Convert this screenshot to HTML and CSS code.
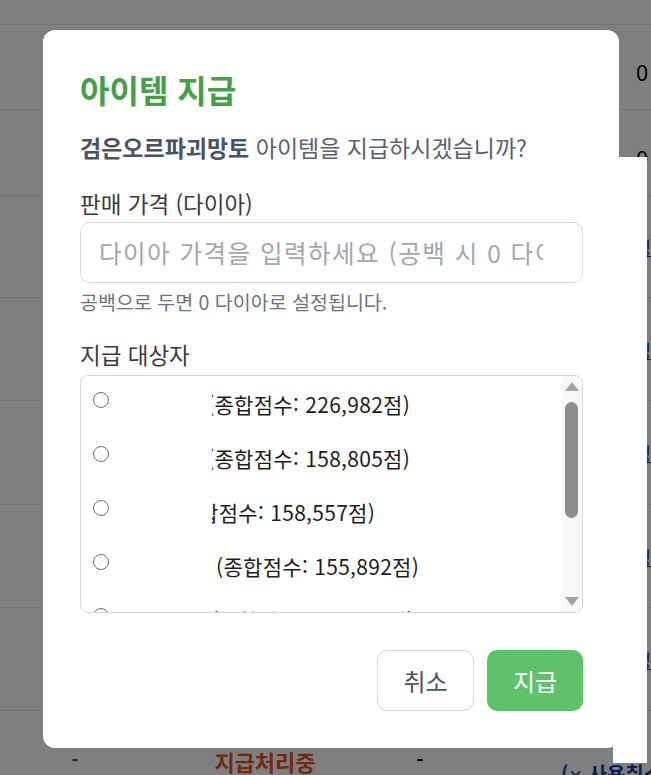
FILE: index.html
```html
<!DOCTYPE html>
<html lang="ko">
<head>
<meta charset="utf-8">
<title>아이템 지급</title>
<link rel="stylesheet" href="styles.css">
</head>
<body>
<div class="bg">
  <div class="row r0"></div>
  <div class="row r1"><div class="c1"></div><div class="c2"></div><div class="c3"></div><div class="c4"></div><div class="c5 num">0</div></div>
  <div class="row r2"><div class="c1"></div><div class="c2"></div><div class="c3"></div><div class="c4"></div><div class="c5 num">0</div></div>
  <div class="row r3"><div class="c1"></div><div class="c2"></div><div class="c3"></div><div class="c4"></div><div class="c5"><span class="lnk">수정</span></div></div>
  <div class="row r4"><div class="c1"></div><div class="c2"></div><div class="c3"></div><div class="c4"></div><div class="c5"><span class="lnk">수정</span></div></div>
  <div class="row r5"><div class="c1"></div><div class="c2"></div><div class="c3"></div><div class="c4"></div><div class="c5"><span class="lnk">수정</span></div></div>
  <div class="row r6"><div class="c1"></div><div class="c2"></div><div class="c3"></div><div class="c4"></div><div class="c5"><span class="lnk">수정</span></div></div>
  <div class="row r7"><div class="c1"></div><div class="c2"></div><div class="c3"></div><div class="c4"></div><div class="c5"><span class="lnk">수정</span></div></div>
  <div class="row r8">
    <div class="c1"><span class="dash-g">-</span></div>
    <div class="c2"><span class="status">지급처리중</span></div>
    <div class="c3"><span class="dash">-</span></div>
    <div class="c4"><span class="cancel-link">(<span class="x">✕</span> 사용취소)</span></div>
    <div class="c5"></div>
  </div>
</div>

<div class="overlay"></div>
<div class="side-panel"></div>

<div class="modal">
  <h2 class="title">아이템 지급</h2>
  <p class="desc"><strong>검은오르파괴망토</strong> 아이템을 지급하시겠습니까?</p>

  <label class="label" for="price">판매 가격 (다이아)</label>
  <input id="price" class="input" type="text" placeholder="다이아 가격을 입력하세요 (공백 시 0 다이아)">
  <p class="hint">공백으로 두면 0 다이아로 설정됩니다.</p>

  <div class="label label2">지급 대상자</div>
  <div class="list">
    <div class="items">
      <label class="opt"><input type="radio" name="target" class="radio"><span class="name" style="width:87px"></span><span class="score">(종합점수: 226,982점)</span></label>
      <label class="opt"><input type="radio" name="target" class="radio"><span class="name" style="width:87px"></span><span class="score">(종합점수: 158,805점)</span></label>
      <label class="opt"><input type="radio" name="target" class="radio"><span class="name" style="width:52px"></span><span class="score">(종합점수: 158,557점)</span></label>
      <label class="opt"><input type="radio" name="target" class="radio"><span class="name" style="width:96px"></span><span class="score">(종합점수: 155,892점)</span></label>
      <label class="opt"><input type="radio" name="target" class="radio"><span class="name" style="width:91px"></span><span class="score">(종합점수: 149,385점)</span></label>
    </div>
    <div class="sbar">
      <span class="arrow-up"></span>
      <span class="thumb"></span>
      <span class="arrow-down"></span>
    </div>
    <span class="mask"></span>
  </div>

  <div class="actions">
    <button class="btn btn-cancel" type="button">취소</button>
    <button class="btn btn-ok" type="button">지급</button>
  </div>
</div>
</body>
</html>
```

FILE: styles.css
```css
* { box-sizing: border-box; }

html, body {
  margin: 0;
  padding: 0;
  height: 100%;
  overflow: hidden;
}

body {
  background: #ffffff;
  font-family: "Noto Sans CJK KR", "Noto Sans", sans-serif;
  color: #222;
}

/* background table */
.bg {
  width: 651px;
}
.row {
  display: flex;
  align-items: center;
  border-bottom: 1px solid #e6e6e6;
  font-size: 20px;
}
.r0 { height: 25px; }
.r1 { height: 85px; }
.r2 { height: 86px; }
.r3 { height: 102px; }
.r4 { height: 103px; }
.r5 { height: 104px; }
.r6 { height: 103px; }
.r7 { height: 103px; }
.r8 { height: 100px; align-items: flex-start; padding-top: 34px; border-bottom: 0; }

.c1 { width: 150px; text-align: center; }
.c2 { width: 230px; text-align: center; }
.c3 { width: 80px; text-align: center; }
.c4 { width: 172px; padding-left: 101px; white-space: nowrap; }
.c5 { flex: 1; white-space: nowrap; padding-left: 4px; }

.num { color: #000; font-size: 22px; padding-top: 8px; }
.lnk { padding-left: 14px; color: #1a3bb0; text-decoration: underline; font-size: 18px; }
.dash-g { color: #2e7d32; font-weight: 700; }
.status { color: #e0561a; font-weight: 700; font-size: 22px; }
.dash { color: #000; font-weight: 700; }
.cancel-link { color: #1a3bb0; font-weight: 700; font-size: 20px; display: inline-block; padding-top: 14px; }
.x { font-family: "DejaVu Sans", sans-serif; font-size: 17px; }

.overlay {
  position: fixed;
  inset: 0;
  background: rgba(0, 0, 0, 0.5);
}

.side-panel {
  position: fixed;
  left: 613px;
  top: 157px;
  width: 34px;
  height: 606px;
  background: #ffffff;
}

/* modal */
.modal {
  position: fixed;
  left: 43px;
  top: 30px;
  width: 576px;
  height: 718px;
  background: #fff;
  border-radius: 12px;
  padding: 40px 36px 37px 37px;
  display: flex;
  flex-direction: column;
}

.title {
  margin: 0;
  font-size: 32px;
  line-height: 38px;
  font-weight: 700;
  color: #43a047;
}

.desc {
  margin: 24px 0 0;
  font-size: 23px;
  line-height: 30px;
  color: #596170;
}
.desc strong {
  color: #4a5261;
  font-weight: 700;
}

.label {
  display: block;
  margin-top: 26px;
  font-size: 22.5px;
  line-height: 30px;
  color: #3a3a3a;
}
.label2 { margin-top: 24px; }

.input {
  display: block;
  margin-top: 4px;
  width: 503px;
  height: 61px;
  border: 1px solid #d6d8de;
  border-radius: 10px;
  padding: 0 39px 0 18px;
  font-family: inherit;
  font-size: 24.5px;
  letter-spacing: 1.5px;
  color: #222;
  background: #fff;
  outline: none;
}
.input::placeholder { color: #a0a6b1; }

.hint {
  margin: 6px 0 0;
  font-size: 19.5px;
  line-height: 26px;
  color: #6b7280;
}

.list {
  position: relative;
  margin-top: 6px;
  width: 503px;
  height: 238px;
  border: 1px solid #d6d8de;
  border-radius: 8px;
  display: flex;
  overflow: hidden;
}

.items {
  flex: 1;
  overflow: hidden;
}

.opt {
  display: flex;
  align-items: flex-start;
  height: 54px;
  padding: 16px 0 0 12px;
  white-space: nowrap;
}

.radio {
  appearance: none;
  -webkit-appearance: none;
  margin: 0;
  width: 16px;
  height: 16px;
  border: 1px solid #6f6f6f;
  border-radius: 50%;
  background: #fff;
  flex: none;
}

.name {
  display: inline-block;
  flex: none;
  margin-left: 11px;
}

.score {
  font-size: 21px;
  line-height: 24px;
  color: #1c1c1c;
  letter-spacing: 0.3px;
}

.mask {
  position: absolute;
  left: 39px;
  top: 0;
  bottom: -1px;
  width: 92px;
  background: #fff;
}

.sbar {
  flex: none;
  width: 21px;
  background: #f8f8f8;
  display: flex;
  flex-direction: column;
  align-items: center;
  padding: 6px 0 6px;
}

.arrow-up {
  width: 0;
  height: 0;
  border-left: 7px solid transparent;
  border-right: 7px solid transparent;
  border-bottom: 9px solid #a3a3a3;
}

.thumb {
  margin-top: 11px;
  width: 13px;
  height: 116px;
  border-radius: 7px;
  background: #8d8d8d;
}

.arrow-down {
  margin-top: auto;
  width: 0;
  height: 0;
  border-left: 7px solid transparent;
  border-right: 7px solid transparent;
  border-top: 9px solid #a3a3a3;
}

.actions {
  margin-top: 37px;
  display: flex;
  justify-content: flex-end;
  gap: 13px;
}

.btn {
  height: 61px;
  border-radius: 10px;
  font-family: inherit;
  font-size: 24px;
  padding: 0;
  cursor: pointer;
}

.btn-cancel {
  width: 97px;
  background: #fff;
  border: 1px solid #d6d8de;
  color: #4b5563;
}

.btn-ok {
  width: 96px;
  background: #5ec26a;
  border: 0;
  color: #fff;
}
```
